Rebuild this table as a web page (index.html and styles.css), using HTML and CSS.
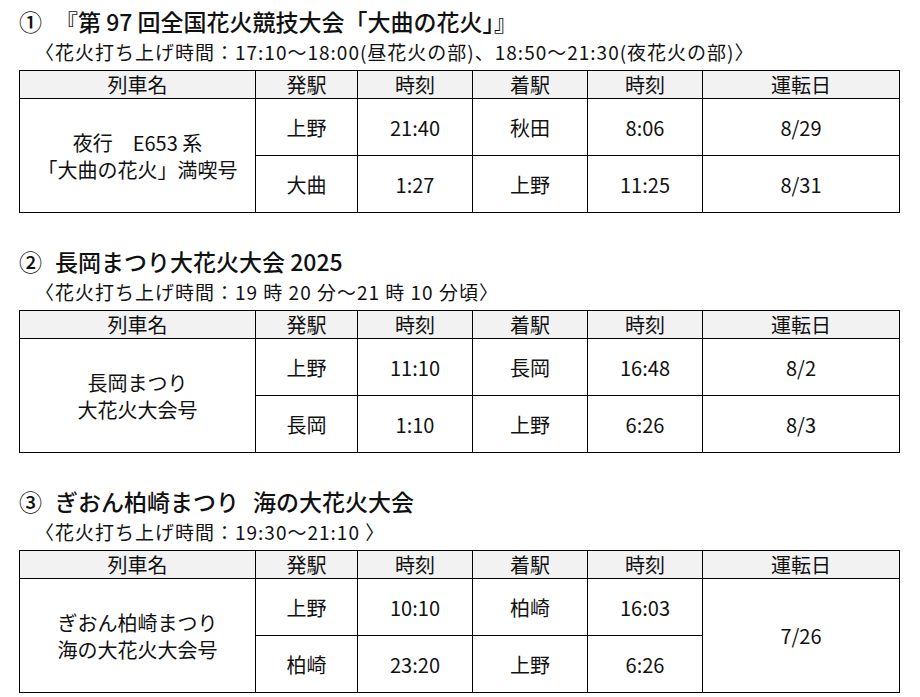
FILE: index.html
```html
<!DOCTYPE html>
<html lang="ja">
<head>
<meta charset="utf-8">
<title>花火列車</title>
<link rel="stylesheet" href="styles.css">
</head>
<body>
<div class="page">
  <section class="sec">
    <h2 class="title"><span class="num">①</span>『第 97 回全国花火競技大会「大曲の花火」』</h2>
    <p class="sub">〈花火打ち上げ時間：17:10～18:00(昼花火の部)、18:50～21:30(夜花火の部)〉</p>
    <table class="tt">
      <colgroup><col class="c1"><col class="c2"><col class="c3"><col class="c4"><col class="c5"><col class="c6"></colgroup>
      <thead><tr><th>列車名</th><th>発駅</th><th>時刻</th><th>着駅</th><th>時刻</th><th>運転日</th></tr></thead>
      <tbody>
        <tr><td rowspan="2" class="name">夜行　E653 系<br>「大曲の花火」満喫号</td><td>上野</td><td>21:40</td><td>秋田</td><td>8:06</td><td>8/29</td></tr>
        <tr><td>大曲</td><td>1:27</td><td>上野</td><td>11:25</td><td>8/31</td></tr>
      </tbody>
    </table>
  </section>
  <section class="sec">
    <h2 class="title"><span class="num">②</span>長岡まつり大花火大会 2025</h2>
    <p class="sub">〈花火打ち上げ時間：19 時 20 分～21 時 10 分頃〉</p>
    <table class="tt">
      <colgroup><col class="c1"><col class="c2"><col class="c3"><col class="c4"><col class="c5"><col class="c6"></colgroup>
      <thead><tr><th>列車名</th><th>発駅</th><th>時刻</th><th>着駅</th><th>時刻</th><th>運転日</th></tr></thead>
      <tbody>
        <tr><td rowspan="2" class="name">長岡まつり<br>大花火大会号</td><td>上野</td><td>11:10</td><td>長岡</td><td>16:48</td><td>8/2</td></tr>
        <tr><td>長岡</td><td>1:10</td><td>上野</td><td>6:26</td><td>8/3</td></tr>
      </tbody>
    </table>
  </section>
  <section class="sec">
    <h2 class="title"><span class="num">③</span>ぎおん柏崎まつり<span class="gap"></span>海の大花火大会</h2>
    <p class="sub">〈花火打ち上げ時間：19:30～21:10 〉</p>
    <table class="tt">
      <colgroup><col class="c1"><col class="c2"><col class="c3"><col class="c4"><col class="c5"><col class="c6"></colgroup>
      <thead><tr><th>列車名</th><th>発駅</th><th>時刻</th><th>着駅</th><th>時刻</th><th>運転日</th></tr></thead>
      <tbody>
        <tr><td rowspan="2" class="name">ぎおん柏崎まつり<br>海の大花火大会号</td><td>上野</td><td>10:10</td><td>柏崎</td><td>16:03</td><td rowspan="2">7/26</td></tr>
        <tr><td>柏崎</td><td>23:20</td><td>上野</td><td>6:26</td></tr>
      </tbody>
    </table>
  </section>
</div>
</body>
</html>
```

FILE: styles.css
```css
html, body {
  margin: 0;
  padding: 0;
  background: #fff;
}
body {
  font-family: "Noto Sans CJK JP", "Noto Sans", sans-serif;
  color: #111;
}
.page {
  padding: 6px 0 0 19px;
}
.sec {
  margin-bottom: 33px;
}
.title {
  margin: 0;
  font-size: 23px;
  font-weight: 500;
  line-height: 30px;
  white-space: nowrap;
}
.num {
  margin-right: 13px;
}
.gap {
  display: inline-block;
  width: 14px;
}
.sub {
  margin: 4px 0 0 16px;
  height: 24px;
  line-height: 24px;
  font-size: 19px;
  letter-spacing: 1px;
  white-space: nowrap;
}
.tt {
  margin-top: 6px;
  border-collapse: collapse;
  table-layout: fixed;
  width: 880px;
  font-size: 20px;
}
.c1 { width: 236px; }
.c2 { width: 102px; }
.c3 { width: 115px; }
.c4 { width: 115px; }
.c5 { width: 115px; }
.c6 { width: 197px; }
.tt th, .tt td {
  border: 1px solid #000;
  text-align: center;
  vertical-align: middle;
  padding: 0;
  font-weight: 400;
}
.tt th {
  background: #f2f2f2;
  height: 27px;
  line-height: 27px;
}
.tt td {
  height: 56px;
  line-height: 27px;
}
```
